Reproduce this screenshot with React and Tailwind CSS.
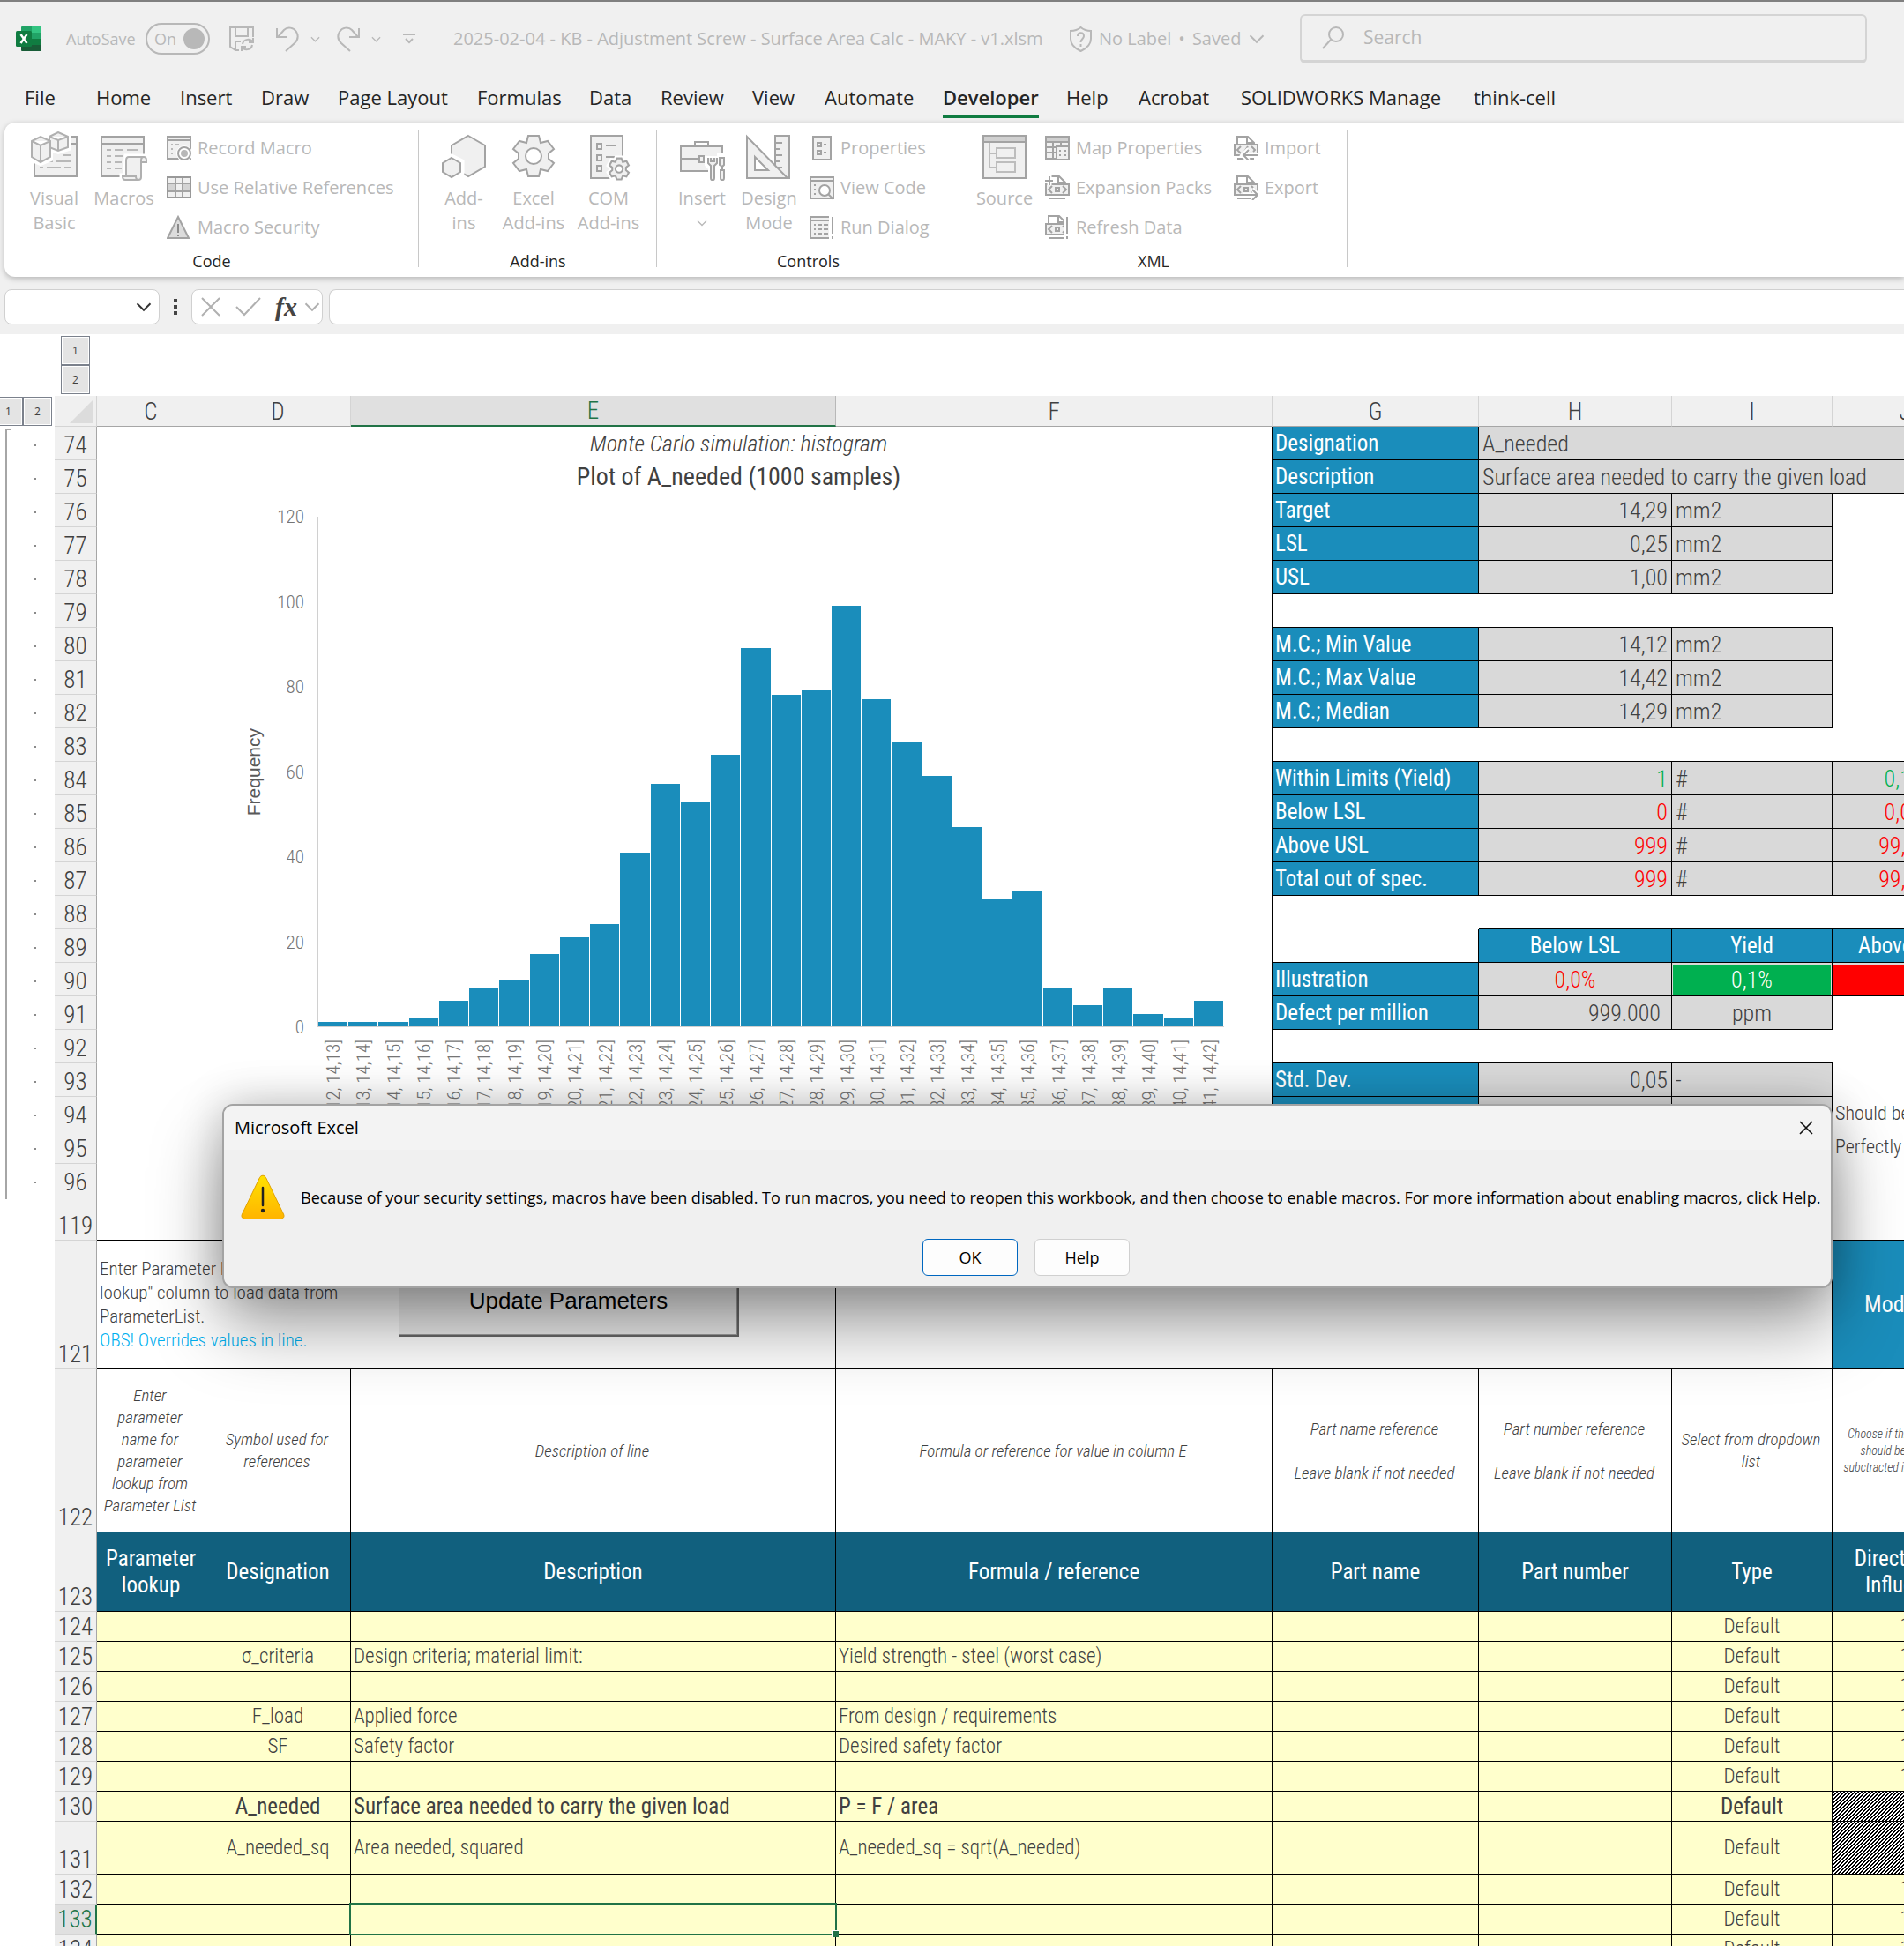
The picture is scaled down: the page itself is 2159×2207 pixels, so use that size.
import React from "react";

const G = "#a3a3a3";
const F = "#f0f0f0";

/* ---------- icons ---------- */

function Big({ children }) {
  return (
    <svg width="54" height="56" viewBox="0 0 54 56" fill="none" stroke={G} strokeWidth="2" aria-hidden="true">
      {children}
    </svg>
  );
}
function Small({ children }) {
  return (
    <svg width="28" height="28" viewBox="0 0 28 28" fill="none" stroke={G} strokeWidth="2" className="shrink-0" aria-hidden="true">
      {children}
    </svg>
  );
}

const VisualBasicIcon = () => (
  <Big>
    <path d="M4 6H52V51H4Z" fill={F} />
    <path d="M4 14H52" />
    <path d="M36 27H46M20 34H25M29 34H46M10 41H14M18 41H34M38 41H46" stroke="#b8b8b8" />
    <path d="M20 5L31 0L43 5V20L31 24L23 21V32L11 37L-1 32V9L11 4Z" fill="#fff" stroke="#fff" strokeWidth="4" />
    <path d="M21 6L31 1L42 6V18L31 22L21 18Z M21 6L31 10L42 6M31 10V22" fill={F} stroke="#b0b0b0" />
    <path d="M1 11L11 6L22 11V29L11 35L1 29Z M1 11L11 16L22 11M11 16V35" fill={F} stroke="#b0b0b0" />
  </Big>
);
const MacrosIcon = () => (
  <Big>
    <path d="M1 6H49V51H1Z" fill={F} />
    <path d="M1 14H49" />
    <path d="M7 21H12M16 21H26M30 21H42M7 28H12M16 28H26M7 35H12M16 35H24M7 42H12M16 42H24" stroke="#b8b8b8" />
    <path d="M29 28H52V36H49V56H24V50H28Z" fill="#fff" stroke="#fff" strokeWidth="5" />
    <path d="M46 35H52V33C52 31 51 29 49 29H32C30 29 29 31 29 33V51H25C25 54 26 55 28 55H43C45 55 46 54 46 52Z" fill={F} stroke="#b0b0b0" />
    <path d="M29 51H40C40 54 41 55 43 55M46 35V33C46 31 47 29 49 29" stroke="#b0b0b0" />
  </Big>
);
const AddinsIcon = () => (
  <Big>
    <path d="M32 5L51 16V40L32 51L13 40V16Z" fill={F} />
    <path d="M13 28L25 34V47L13 54L1 47V34Z" fill="#fff" stroke="#fff" strokeWidth="5" />
    <path d="M13 30L23 36V46L13 52L3 46V36Z" fill={F} />
  </Big>
);
const gear = "M22 5H32L35 13L43 11L48 20L42 25V31L48 36L43 45L35 43L32 51H22L19 43L11 45L6 36L12 31V25L6 20L11 11L19 13Z";
const ExcelAddinsIcon = () => (
  <Big>
    <path d="M21 5H33L35 13L43 11L50 20L44 25V31L50 36L43 45L35 43L33 51H21L19 43L11 45L4 36L10 31V25L4 20L11 11L19 13Z" fill={F} />
    <circle cx="27" cy="28" r="9" fill="#fff" />
  </Big>
);
const ComAddinsIcon = () => (
  <Big>
    <path d="M7 5H43V53H7Z" fill={F} />
    <path d="M14 14H19V20H14ZM24 16H36M14 27H19V33H14ZM24 29H34M14 39H19V45H14Z" />
    <g transform="translate(25 28) scale(.52)">
      <path d={gear} fill="#fff" stroke="#fff" strokeWidth="12" />
      <path d={gear} fill={F} strokeWidth="4" />
      <circle cx="27" cy="28" r="8" fill="#fff" strokeWidth="4" />
    </g>
  </Big>
);
const InsertIcon = () => (
  <Big>
    <path d="M3 17H50V45H3Z" fill={F} />
    <path d="M19 17V12H34V17M3 31H24M29 31H50M24 28H29V35H24Z" />
    <path d="M32 30V38L36 42V55H42L46 50L48 55H53V27H46V30Z" fill="#fff" stroke="#fff" strokeWidth="4" />
    <path d="M34 30V36L37 39V53C37 56 41 56 41 53V39L44 36V30M37 30V34H41V30" fill={F} />
    <path d="M47 30H52V38L50 40V44H52V53C52 56 48 56 48 53V44H50V40L47 38Z" fill={F} />
  </Big>
);
const DesignIcon = () => (
  <Big>
    <path d="M34 5H50V53H34Z" fill={F} />
    <path d="M34 13H42M34 20H39M34 27H42M34 34H39M34 41H42" />
    <path d="M2 6L48 53H2Z" fill={F} />
    <path d="M11 29L26 44H11Z" fill="#fff" />
  </Big>
);
const SourceIcon = () => (
  <Big>
    <path d="M3 5H51V53H3Z" fill={F} />
    <path d="M3 5H51V12H3Z" fill="#d0d0d0" />
    <path d="M10 13V41H18M10 25H18M18 19H39V30H18ZM18 35H39V46H18Z" stroke="#bdbdbd" />
  </Big>
);

const RecordIcon = () => (
  <Small>
    <path d="M1 1H27V26H1Z" fill={F} />
    <path d="M1 5H27" />
    <path d="M5 10H7M9 10H14M5 15H7M5 20H7" stroke="#b8b8b8" />
    <circle cx="20" cy="20" r="9" fill="#fff" stroke="none" />
    <circle cx="20" cy="20" r="7" fill="#fff" />
    <circle cx="20" cy="20" r="3" fill="#b8b8b8" stroke="#b8b8b8" />
  </Small>
);
const RelativeIcon = () => (
  <Small>
    <path d="M1 2H27V25H1Z" fill={F} />
    <path d="M1 9H10V18H1ZM18 9H27V18H18Z" fill="#d4d4d4" stroke="none" />
    <path d="M10 2V25M18 2V25M1 9H27M1 18H27" />
    <path d="M1 2H27V25H1Z" stroke="#999" />
  </Small>
);
const SecurityIcon = () => (
  <Small>
    <path d="M13 2L25 26H1Z" fill="#dcdcdc" />
    <path d="M13 10V20M13 22V24" stroke="#8a8a8a" />
  </Small>
);
const PropertiesIcon = () => (
  <Small>
    <path d="M4 1H24V27H4Z" fill={F} />
    <path d="M9 8H13V12H9ZM16 10H19M9 17H13V21H9ZM16 19H19" />
  </Small>
);
const ViewCodeIcon = () => (
  <Small>
    <path d="M1 2H27V26H1Z" fill={F} />
    <path d="M1 6H27M5 11H7M5 16H7M5 21H7" />
    <circle cx="17" cy="17" r="6" fill="#fff" />
    <path d="M21 21L27 27" />
  </Small>
);
const RunDialogIcon = () => (
  <Small>
    <path d="M22 2H1V26H22" fill={F} />
    <path d="M1 6H22M5 11H7M9 11H14M16 11H21M5 16H7M9 16H14M16 16H21M5 21H7M9 21H14M16 21H21M26 2V21M26 24V27" />
  </Small>
);
const MapIcon = () => (
  <Small>
    <path d="M1 1H27V26H1Z" fill={F} />
    <path d="M1 1H27V7H1Z" fill="#d0d0d0" />
    <path d="M9 7V26M18 7V12M1 13H12M1 19H12" />
    <path d="M13 12H27V27H13Z" fill={F} />
    <path d="M16 17H18M21 17H24M16 22H18M21 22H24" />
  </Small>
);
function XmlIcon({ children, extra }) {
  return (
    <Small>
      <path d="M4 10V1H16L23 8V10" />
      <path d="M15 1V8H22" />
      <path d="M1 10H27V22H1Z" fill={F} />
      <path d="M4 26H23" />
      {children || <path d="M8 12L4 16L8 20M20 12L24 16L20 20M12 14H16V18H12Z" />}
      {extra}
    </Small>
  );
}
const ExpansionIcon = () => (
  <XmlIcon
    extra={
      <>
        <path d="M0 5H9M5 0V11" stroke="#fff" strokeWidth="5" />
        <path d="M0 6H9M5 1V11" />
      </>
    }
  />
);
const RefreshIcon = () => (
  <XmlIcon
    extra={
      <>
        <path d="M25 0V28" stroke="#fff" strokeWidth="6" />
        <path d="M25 2V21M25 24V27" />
      </>
    }
  />
);
const ImportIcon = () => (
  <XmlIcon
    extra={
      <>
        <path d="M11 22H28M17 15L10 22L17 28" stroke="#fff" strokeWidth="5" />
        <path d="M11 22H27M17 16L11 22L17 28" />
      </>
    }
  >
    <path d="M8 12L4 16L8 20M20 12L24 16L22 18M16 12L12 18" />
  </XmlIcon>
);
const ExportIcon = () => (
  <XmlIcon
    extra={
      <>
        <path d="M10 22H27M21 15L27 22L21 28" stroke="#fff" strokeWidth="5" />
        <path d="M10 22H26M21 16L27 22L21 28" />
      </>
    }
  />
);

function Chevron({ className, w = 10 }) {
  return (
    <svg className={className} width={w} height={w} viewBox="0 0 12 12" fill="none" stroke="currentColor" strokeWidth="1.3" aria-hidden="true">
      <path d="M1 3.5L6 8.5L11 3.5" />
    </svg>
  );
}

const ExcelLogo = () => (
  <svg width="29" height="28" viewBox="0 0 29 28" className="shrink-0" aria-hidden="true">
    <path d="M7 0H28a1 1 0 0 1 1 1V14H6V1a1 1 0 0 1 1-1z" fill="#21a366" />
    <path d="M18 0h10a1 1 0 0 1 1 1v6H18z" fill="#33c481" />
    <path d="M6 7h12v7H6z" fill="#107c41" />
    <path d="M18 7h11v7H18z" fill="#21a366" />
    <path d="M6 14h23v13a1 1 0 0 1-1 1H7a1 1 0 0 1-1-1z" fill="#185c37" />
    <path d="M18 14h11v7H18z" fill="#107c41" />
    <rect x="0" y="5" width="18" height="18" rx="1.5" fill="#107c41" />
    <path d="M5.5 9L12.5 19M12.5 9L5.5 19" stroke="#fff" strokeWidth="2.4" />
  </svg>
);

/* ---------- title bar ---------- */

function TitleBar() {
  return (
    <div className="flex h-[84px] shrink-0 items-center pl-[18px] text-[#b8b8b8]">
      <ExcelLogo />
      <label htmlFor="autosave" className="ml-7 w-[90px] whitespace-nowrap text-[18px]">AutoSave</label>
      <button id="autosave" role="switch" aria-checked="true" className="flex h-9 w-[73px] shrink-0 items-center justify-between rounded-full border-2 border-[#b8b8b8] pl-2 pr-1 text-[18px]">
        On
        <span className="size-6 rounded-full bg-[#b8b8b8]" />
      </button>
      <button aria-label="Save" className="ml-[22px]">
        <svg width="29" height="29" viewBox="0 0 29 29" fill="none" stroke="currentColor" strokeWidth="2">
          <path d="M11 27H7L1 23V1H27V12M7 1V11H21V1M7 27V17H13" />
          <path d="M27 13V18H22M27 18C24 13 16 14 15 20M14 28V23H19M14 23C17 28 25 27 26 21" />
        </svg>
      </button>
      <button aria-label="Undo" className="ml-6">
        <svg width="26" height="29" viewBox="0 0 26 29" fill="none" stroke="currentColor" strokeWidth="2">
          <path d="M1 2V12H12M2 12L9 4C13 0 20 1 23 6C26 11 25 15 21 19L11 28" />
        </svg>
      </button>
      <Chevron className="ml-[13px]" w={11} />
      <button aria-label="Redo" className="ml-[19px]">
        <svg width="26" height="29" viewBox="0 0 26 29" fill="none" stroke="currentColor" strokeWidth="2">
          <path d="M25 2V12H14M24 12L17 4C13 0 6 1 3 6C0 11 1 15 5 19L15 28" />
        </svg>
      </button>
      <Chevron className="ml-[13px]" w={11} />
      <svg className="ml-[25px] shrink-0" width="14" height="14" viewBox="0 0 14 14" fill="none" stroke="currentColor" strokeWidth="2" aria-hidden="true">
        <path d="M0 2H14M3 7L7 11L11 7" />
      </svg>
      <h1 className="ml-[43px] w-[699px] shrink-0 whitespace-nowrap text-[20px]">
        2025-02-04 - KB - Adjustment Screw - Surface Area Calc - MAKY - v1.xlsm
      </h1>
      <svg className="shrink-0" width="25" height="29" viewBox="0 0 25 29" fill="none" stroke="currentColor" strokeWidth="2" aria-hidden="true">
        <path d="M12.500 1C9 4 5 5 1 5V14C1 20 6 25 12.500 28C19 25 24 20 24 14V5C20 5 16 4 12.500 1Z" />
        <path d="M9 11C9 6 16 6 16 11C16 14 12.500 14 12.500 18M12.500 20V23" />
      </svg>
      <span className="ml-2 flex w-[170px] shrink-0 gap-2 whitespace-nowrap text-[20px]">
        <span>No Label</span>
        <span>•</span>
        <span>Saved</span>
      </span>
      <Chevron className="shrink-0" w={18} />
      <label className="ml-10 mr-[42px] flex h-14 grow items-center rounded-md border-2 border-b-4 border-[#d4d4d4] pl-[23px]">
        <svg width="25" height="26" viewBox="0 0 25 26" fill="none" stroke="currentColor" strokeWidth="2" aria-hidden="true">
          <circle cx="16" cy="9" r="8" />
          <path d="M10 15L1 25" />
        </svg>
        <input placeholder="Search" aria-label="Search" className="ml-[22px] min-w-0 grow bg-transparent text-[21px] outline-none placeholder:text-[#b8b8b8]" />
      </label>
    </div>
  );
}

/* ---------- tabs ---------- */

const tabs = [
  ["File", "w-[81px]"],
  ["Home", "w-[95px]"],
  ["Insert", "w-[92px]"],
  ["Draw", "w-[87px]"],
  ["Page Layout", "w-[158px]"],
  ["Formulas", "w-[127px]"],
  ["Data", "w-[81px]"],
  ["Review", "w-[104px]"],
  ["View", "w-[82px]"],
  ["Automate", "w-[134px]"],
  ["Developer", "w-[140px]"],
  ["Help", "w-[82px]"],
  ["Acrobat", "w-[116px]"],
  ["SOLIDWORKS Manage", "w-[264px]"],
  ["think-cell", "w-[120px]"],
];

function Tabs() {
  return (
    <nav className="flex h-[53px] shrink-0 pl-7 text-[22px] text-[#252525]">
      {tabs.map(([name, w]) => (
        <div key={name} className={`${w} shrink-0`}>
          <button
            className={
              name === "Developer"
                ? "h-12 whitespace-nowrap border-b-4 border-[#107c41] pb-1 pt-2 font-semibold leading-8"
                : "h-12 whitespace-nowrap border-b-4 border-transparent pb-1 pt-2 leading-8"
            }
          >
            {name}
          </button>
        </div>
      ))}
    </nav>
  );
}

/* ---------- ribbon ---------- */

function BigButton({ icon, lines, w }) {
  return (
    <button className={`${w} flex shrink-0 flex-col items-center pt-1 text-[20px] leading-7`}>
      {icon}
      <span className="mt-[6px] whitespace-nowrap">
        {lines.map((l, i) => (
          <span key={i} className="block">{l}</span>
        ))}
      </span>
    </button>
  );
}
function SmallButton({ icon, children }) {
  return (
    <button className="flex h-[45px] items-center gap-[7px] whitespace-nowrap text-[20px] leading-7">
      {icon}
      {children}
    </button>
  );
}
function Group({ label, w, pl, children }) {
  return (
    <section className={`${w} flex shrink-0 flex-col pt-[6px]`}>
      <div className={`${pl} flex h-[137px]`}>{children}</div>
      <h2 className="text-center text-[18px] leading-7 text-[#252525]">{label}</h2>
    </section>
  );
}
const Sep = () => <div className="-ml-px mb-[11px] mt-2 w-px shrink-0 bg-[#c8c8c8]" />;

function Ribbon() {
  return (
    <div className="ml-[5px] flex h-[175px] shrink-0 rounded-l-xl bg-white text-[#b8b8b8] shadow-[0_2px_6px_rgba(0,0,0,0.25)]">
      <Group label="Code" w="w-[470px]" pl="pl-[17px]">
        <BigButton icon={<VisualBasicIcon />} lines={["Visual", "Basic"]} w="w-[79px]" />
        <BigButton icon={<MacrosIcon />} lines={["Macros"]} w="w-[79px]" />
        <div className="ml-[9px]">
          <SmallButton icon={<RecordIcon />}>Record Macro</SmallButton>
          <SmallButton icon={<RelativeIcon />}>Use Relative References</SmallButton>
          <SmallButton icon={<SecurityIcon />}>Macro Security</SmallButton>
        </div>
      </Group>
      <Sep />
      <Group label="Add-ins" w="w-[270px]" pl="pl-[11px]">
        <BigButton icon={<AddinsIcon />} lines={["Add-", "ins"]} w="w-[80px]" />
        <BigButton icon={<ExcelAddinsIcon />} lines={["Excel", "Add-ins"]} w="w-[78px]" />
        <BigButton icon={<ComAddinsIcon />} lines={["COM", "Add-ins"]} w="w-[92px]" />
      </Group>
      <Sep />
      <Group label="Controls" w="w-[343px]" pl="pl-[13px]">
        <BigButton icon={<InsertIcon />} lines={["Insert", <Chevron key="c" className="mx-auto mt-2" w={12} />]} w="w-[76px]" />
        <BigButton icon={<DesignIcon />} lines={["Design", "Mode"]} w="w-[76px]" />
        <div className="ml-2">
          <SmallButton icon={<PropertiesIcon />}>Properties</SmallButton>
          <SmallButton icon={<ViewCodeIcon />}>View Code</SmallButton>
          <SmallButton icon={<RunDialogIcon />}>Run Dialog</SmallButton>
        </div>
      </Group>
      <Sep />
      <Group label="XML" w="w-[440px]" pl="pl-[10px]">
        <BigButton icon={<SourceIcon />} lines={["Source"]} w="w-[82px]" />
        <div className="ml-[5px] w-[214px]">
          <SmallButton icon={<MapIcon />}>Map Properties</SmallButton>
          <SmallButton icon={<ExpansionIcon />}>Expansion Packs</SmallButton>
          <SmallButton icon={<RefreshIcon />}>Refresh Data</SmallButton>
        </div>
        <div>
          <SmallButton icon={<ImportIcon />}>Import</SmallButton>
          <SmallButton icon={<ExportIcon />}>Export</SmallButton>
        </div>
      </Group>
      <Sep />
    </div>
  );
}

/* ---------- formula bar ---------- */

function FormulaBar() {
  return (
    <div className="flex h-[65px] shrink-0 items-start pl-[5px] pt-[14px]">
      <div className="flex h-10 w-44 shrink-0 items-center rounded-lg border border-[#d0d0d0] bg-white pr-2">
        <input aria-label="Name Box" className="min-w-0 grow bg-transparent outline-none" />
        <Chevron className="shrink-0 text-[#333]" w={18} />
      </div>
      <svg className="ml-4 mt-[10px] shrink-0" width="4" height="20" viewBox="0 0 4 20" fill="#444" aria-hidden="true">
        <path d="M0 1h4v4H0zM0 8h4v4H0zM0 15h4v4H0z" />
      </svg>
      <div className="ml-4 flex h-10 w-[149px] shrink-0 items-center rounded-lg border border-[#d0d0d0] bg-white pl-[10px] text-[#b0b0b0]">
        <button aria-label="Cancel">
          <svg width="22" height="22" viewBox="0 0 22 22" fill="none" stroke="currentColor" strokeWidth="2"><path d="M1 1L21 21M21 1L1 21" /></svg>
        </button>
        <button aria-label="Enter" className="ml-[17px]">
          <svg width="29" height="22" viewBox="0 0 29 22" fill="none" stroke="currentColor" strokeWidth="2"><path d="M1 11L10 20L28 1" /></svg>
        </button>
        <button className="ml-4 font-['Liberation_Serif',serif] text-[30px] font-bold italic leading-8 text-[#444]">fx</button>
        <Chevron className="ml-2 shrink-0" w={18} />
      </div>
      <input aria-label="Formula Bar" className="ml-[7px] h-10 min-w-0 grow rounded-l-lg border border-r-0 border-[#d0d0d0] bg-white outline-none" />
    </div>
  );
}

/* ---------- chart ---------- */

const freq = [1, 1, 1, 2, 6, 9, 11, 17, 21, 24, 41, 57, 53, 64, 89, 78, 79, 99, 77, 67, 59, 47, 30, 32, 9, 5, 9, 3, 2, 6];
const ticks = [120, 100, 80, 60, 40, 20, 0];

function Chart() {
  return (
    <figure className="flex h-[799px] flex-col overflow-hidden font-light">
      <figcaption className="pt-[3px] text-center text-[28px] font-normal leading-8 text-[#404040]">Plot of A_needed (1000 samples)</figcaption>
      <div className="mt-[29px] flex h-[579px] pl-[40px]">
        <div className="flex w-[30px] items-center justify-center">
          <span className="rotate-180 font-['Liberation_Sans',sans-serif] text-[21px] font-normal text-[#595959] [writing-mode:vertical-rl]">Frequency</span>
        </div>
        <div className="-my-4 flex w-[42px] flex-col justify-between text-right text-[21px] leading-8 text-[#757575]">
          {ticks.map((t) => (
            <span key={t}>{t}</span>
          ))}
        </div>
        <div className="ml-[15px] flex w-[1028px] items-end border-b border-l border-[#d0d0d0]">
          {freq.map((f, i) => (
            <div key={i} className="flex-1 border-r border-white bg-[#1a8dbb]" style={{ height: `${(f / 120) * 100}%` }} />
          ))}
        </div>
      </div>
      <div className="ml-[128px] mt-[14px] flex w-[1028px] text-[21px] text-[#757575]">
        {freq.map((_, i) => (
          <div key={i} className="flex flex-1 justify-center">
            <span className="rotate-180 whitespace-nowrap text-right leading-6 [writing-mode:vertical-rl]">{`[14,${12 + i}, 14,${13 + i}]`}</span>
          </div>
        ))}
      </div>
    </figure>
  );
}

/* ---------- worksheet ---------- */

const RH = "border-b border-r border-b-[#d4d4d4] border-r-[#a6a6a6] bg-[#f0f0f0] p-0 text-center align-bottom text-[27px] font-light leading-8 text-[#404040]";
const LBL = "border-b border-r border-black bg-[#1a8dbb] px-[3px] py-0 text-left text-[25px] font-normal leading-8 text-white";
const LBLC = "border-b border-r border-black bg-[#1a8dbb] px-1 py-0 text-center text-[25px] font-normal leading-8 text-white";
const VAL = "border-b border-r border-black bg-[#d9d9d9] px-1 py-0 text-[26px] font-light leading-8 whitespace-nowrap";

const stats = [
  { r: 74, label: "Designation", wide: "A_needed" },
  { r: 75, label: "Description", wide: "Surface area needed to carry the given load" },
  { r: 76, label: "Target", v: "14,29", u: "mm2" },
  { r: 77, label: "LSL", v: "0,25", u: "mm2" },
  { r: 78, label: "USL", v: "1,00", u: "mm2" },
  { r: 79 },
  { r: 80, label: "M.C.; Min Value", v: "14,12", u: "mm2" },
  { r: 81, label: "M.C.; Max Value", v: "14,42", u: "mm2" },
  { r: 82, label: "M.C.; Median", v: "14,29", u: "mm2" },
  { r: 83 },
  { r: 84, label: "Within Limits (Yield)", v: "1", u: "#", j: "0,1%", c: "text-[#00b050]" },
  { r: 85, label: "Below LSL", v: "0", u: "#", j: "0,0%", c: "text-[#ff0000]" },
  { r: 86, label: "Above USL", v: "999", u: "#", j: "99,9%", c: "text-[#ff0000]" },
  { r: 87, label: "Total out of spec.", v: "999", u: "#", j: "99,9%", c: "text-[#ff0000]" },
  { r: 88 },
  { r: 89, head: true },
  { r: 90, bars: true },
  { r: 91, label: "Defect per million", v: "999.000", u: "ppm", dpm: true },
  { r: 92 },
  { r: 93, label: "Std. Dev.", v: "0,05", u: "-" },
  { r: 94, label: "\u00a0", v: "1,07", note: "Should be" },
  { r: 95, label: "\u00a0", note: "Perfectly" },
  { r: 96, label: "\u00a0" },
];

function StatCells({ s, next }) {
  const line = next ? "border-b border-b-black" : "";
  if (s.wide)
    return (
      <>
        <th scope="row" className={LBL}>{s.label}</th>
        <td colSpan={3} className={`${VAL} text-left text-[#404040]`}>{s.wide}</td>
      </>
    );
  if (s.head)
    return (
      <>
        <td className="border-b border-r border-black" />
        <th scope="col" className={LBLC}>Below LSL</th>
        <th scope="col" className={LBLC}>Yield</th>
        <th scope="col" className={LBLC}>Above USL</th>
      </>
    );
  if (s.bars)
    return (
      <>
        <th scope="row" className={LBL}>Illustration</th>
        <td className={`${VAL} text-center text-[#ff0000]`}>0,0%</td>
        <td className="border-b border-r border-black bg-[#d9d9d9] p-px text-center text-[26px] font-light text-white">
          <div className="bg-[#00b050] leading-[34px]">0,1%</div>
        </td>
        <td className="border-b border-r border-black bg-[#d9d9d9] p-px">
          <div className="h-[34px] bg-[#ff0000]" />
        </td>
      </>
    );
  if (!s.label)
    return (
      <>
        <td className={line} />
        <td className={line} />
        <td className={line} />
        <td className={next === "j" ? line : ""} />
      </>
    );
  return (
    <>
      <th scope="row" className={LBL}>{s.label}</th>
      <td className={`${VAL} text-right ${s.c || "text-[#404040]"} ${s.dpm ? "pr-3" : ""}`}>{s.v}</td>
      <td className={`${VAL} ${s.dpm ? "text-center" : "text-left"} text-[#404040]`}>{s.u}</td>
      {s.j ? (
        <td className={`${VAL} text-center ${s.c}`}>{s.j}</td>
      ) : (
        <td className="whitespace-nowrap px-[3px] py-0 text-left text-[22px] font-light leading-8 text-[#404040]">{s.note}</td>
      )}
    </>
  );
}

const NOTE = "border-b border-r border-black pl-1 pr-[6px] py-0 text-center text-[19px] font-light italic leading-[25px] text-[#404040]";
const HEAD = "border-b border-r border-black bg-[#11607e] p-0 text-center text-[25px] font-normal leading-[30px] text-white whitespace-nowrap";

const params = [
  { r: 124 },
  { r: 125, d: "σ_criteria", e: "Design criteria; material limit:", f: "Yield strength - steel (worst case)" },
  { r: 126 },
  { r: 127, d: "F_load", e: "Applied force", f: "From design / requirements" },
  { r: 128, d: "SF", e: "Safety factor", f: "Desired safety factor" },
  { r: 129 },
  { r: 130, d: "A_needed", e: "Surface area needed to carry the given load", f: "P = F / area", bold: true, hatch: true },
  { r: 131, d: "A_needed_sq", e: "Area needed, squared", f: "A_needed_sq = sqrt(A_needed)", tall: true, hatch: true },
  { r: 132 },
  { r: 133, sel: true },
  { r: 134 },
];

function ParamRow({ p }) {
  const cell = "border-b border-r border-black px-[3px] pb-0 pt-px leading-8";
  return (
    <tr className={`${p.tall ? "h-[60px]" : "h-[34px]"} bg-[#ffffcc] text-[#404040] ${p.bold ? "text-[25px] font-normal" : "text-[23px] font-light"}`}>
      <th
        scope="row"
        className={
          p.sel
            ? "border-b border-r-2 border-b-[#d4d4d4] border-r-[#217346] bg-[#e0e0e0] p-0 text-center align-bottom text-[27px] font-light leading-8 text-[#217346]"
            : RH
        }
      >
        {p.r}
      </th>
      <td className={cell} />
      <td className={`${cell} text-center`}>{p.d}</td>
      <td className={p.sel ? "relative border-b border-r border-black p-0" : cell}>
        {p.e}
        {p.sel && (
          <div className="absolute -inset-x-0.5 -inset-y-0.5 border-2 border-[#217346]">
            <span className="absolute -bottom-1 -right-1 size-2 border-l border-t border-white bg-[#217346]" />
          </div>
        )}
      </td>
      <td className={cell}>{p.f}</td>
      <td className={cell} />
      <td className={cell} />
      <td className={`${cell} text-center`}>Default</td>
      {p.hatch ? (
        <td className="border-b border-r border-black bg-[linear-gradient(135deg,#000_25%,#fff_25%,#fff_50%,#000_50%,#000_75%,#fff_75%)] bg-[length:4px_4px]" />
      ) : (
        <td className={`${cell} text-center`}>1</td>
      )}
    </tr>
  );
}

const cols = ["C", "D", "E", "F", "G", "H", "I", "J"];

function LevelButton({ n }) {
  return (
    <button className="flex h-[33px] w-[33px] shrink-0 items-center justify-center border border-[#7b818c] bg-[#e4e4e4] text-[12px] text-[#404040] shadow-[inset_0_0_0_1px_#fff]">{n}</button>
  );
}

function Sheet() {
  return (
    <div className="flex grow flex-col bg-white">
      <div className="flex h-[70px] shrink-0 flex-col pl-[69px] pt-[2px]">
        <LevelButton n="1" />
        <LevelButton n="2" />
      </div>
      <div className="flex">
        <div className="w-[62px] shrink-0">
          <div className="-ml-[7px] flex h-[35px] pt-px">
            <LevelButton n="1" />
            <LevelButton n="2" />
          </div>
          <div className="ml-[6px] mt-[2px] flex border-l-2 border-[#a6a6a6]">
            <div className="h-[2px] w-1 bg-[#a6a6a6]" />
            <div className="ml-[27px]">
              {stats.map((s) => (
                <div key={s.r} className="flex h-[38px] items-center">
                  <span className="size-[2px] bg-[#8a8a8a]" />
                </div>
              ))}
            </div>
          </div>
        </div>
        <table className="w-[2181px] shrink-0 table-fixed border-separate border-spacing-0 font-['Roboto_Condensed','Roboto',sans-serif]">
          <colgroup>
            <col className="w-[48px]" />
            <col className="w-[123px]" />
            <col className="w-[165px]" />
            <col className="w-[550px]" />
            <col className="w-[495px]" />
            <col className="w-[234px]" />
            <col className="w-[219px]" />
            <col className="w-[182px]" />
            <col className="w-[165px]" />
          </colgroup>
          <thead>
            <tr className="h-[35px]">
              <th className="border-b border-r border-[#d4d4d4] bg-[#f0f0f0] p-0">
                <svg className="ml-[17px]" width="28" height="27" viewBox="0 0 28 27" aria-label="Select all"><path d="M27 0V27H0Z" fill="#dcdcdc" /></svg>
              </th>
              {cols.map((c) => (
                <th
                  key={c}
                  scope="col"
                  className={
                    c === "E"
                      ? "border-b-2 border-r border-b-[#217346] border-r-[#b8b8b8] bg-[#e0e0e0] px-0 pb-0 pt-px text-[27px] font-light leading-8 text-[#217346]"
                      : "border-b border-r border-b-[#a6a6a6] border-r-[#d4d4d4] bg-[#f0f0f0] px-0 pb-0 pt-px text-[27px] font-light leading-8 text-[#404040]"
                  }
                >
                  {c}
                </th>
              ))}
            </tr>
          </thead>
          <tbody>
            {stats.map((s, i) => {
              const n = stats[i + 1];
              const next = n && n.label ? (n.j ? "j" : "y") : false;
              return (
                <tr key={s.r} className="h-[38px]">
                  <th scope="row" className={RH}>{s.r}</th>
                  <td className="border-r border-black" />
                  {s.r === 74 && (
                    <td colSpan={3} className="border-r border-black p-0 text-center text-[26px] font-light italic leading-8 text-[#404040]">
                      Monte Carlo simulation: histogram
                    </td>
                  )}
                  {s.r === 75 && (
                    <td colSpan={3} rowSpan={22} className="border-r border-black p-0 align-top">
                      <Chart />
                    </td>
                  )}
                  {s.r === 88 ? (
                    <>
                      <td />
                      <td className="border-b border-black" />
                      <td className="border-b border-black" />
                      <td className="border-b border-black" />
                    </>
                  ) : (
                    <StatCells s={s} next={next} />
                  )}
                </tr>
              );
            })}
            <tr className="h-[49px]">
              <th scope="row" className={RH}>119</th>
              <td colSpan={8} className="border-b border-black" />
            </tr>
            <tr className="h-[146px]">
              <th scope="row" className={RH}>121</th>
              <td colSpan={3} className="border-b border-r border-black p-0 align-top">
                <div className="flex h-[145px]">
                  <p className="w-[343px] pl-[3px] pt-[19px] text-[21px] font-light leading-[27px] text-[#404040]">
                    Enter Parameter Name in "Parameter lookup" column to load data from ParameterList.
                    <span className="block text-[#00b0f0]">OBS! Overrides values in line.</span>
                  </p>
                  <button className="mb-[36px] mt-[30px] w-[385px] border-b-2 border-r-2 border-[#696969] bg-[#f0f0f0] font-['Liberation_Sans',sans-serif] text-[26px] text-black shadow-[inset_-1px_-1px_0_#a0a0a0]">
                    Update Parameters
                  </button>
                </div>
              </td>
              <td colSpan={4} className="border-b border-r border-black" />
              <td className="border-b border-black bg-[#1a8dbb] p-0 pl-9 text-left text-[26px] text-white">Model</td>
            </tr>
            <tr className="h-[185px]">
              <th scope="row" className={RH}>122</th>
              <td className={NOTE}>Enter parameter name for parameter lookup from Parameter List</td>
              <td className={NOTE}>Symbol used for references</td>
              <td className={NOTE}>Description of line</td>
              <td className={NOTE}>Formula or reference for value in column E</td>
              <td className={NOTE}>Part name reference<br /><br />Leave blank if not needed</td>
              <td className={NOTE}>Part number reference<br /><br />Leave blank if not needed</td>
              <td className={NOTE}>Select from dropdown list</td>
              <td className="whitespace-nowrap border-b border-r border-black p-0 text-center text-[14px] font-light italic leading-[19px] text-[#404040]">
                Choose if this parameter<br />should be added or<br />subctracted in the formula
              </td>
            </tr>
            <tr className="h-[90px]">
              <th scope="row" className={RH}>123</th>
              <th scope="col" className={HEAD}>Parameter<br />lookup</th>
              <th scope="col" className={HEAD}>Designation</th>
              <th scope="col" className={HEAD}>Description</th>
              <th scope="col" className={HEAD}>Formula / reference</th>
              <th scope="col" className={HEAD}>Part name</th>
              <th scope="col" className={HEAD}>Part number</th>
              <th scope="col" className={HEAD}>Type</th>
              <th scope="col" className={HEAD}>Direction of<br />Influence</th>
            </tr>
            {params.map((p) => (
              <ParamRow key={p.r} p={p} />
            ))}
          </tbody>
        </table>
      </div>
    </div>
  );
}

/* ---------- message box ---------- */

function MessageBox() {
  return (
    <div
      role="dialog"
      aria-labelledby="msg-title"
      className="absolute left-[252px] top-[1250px] flex w-[1826px] flex-col overflow-hidden rounded-xl border-2 border-[#a3a3a3] bg-[#f0f0f0] text-black shadow-[0_44px_80px_rgba(0,0,0,0.38),0_0_50px_rgba(0,0,0,0.22)]"
    >
      <div className="flex h-[50px] items-center justify-between bg-[#f3f3f3] pl-3 pr-5">
        <h2 id="msg-title" className="text-[20px]">Microsoft Excel</h2>
        <button aria-label="Close">
          <svg width="16" height="16" viewBox="0 0 16 16" stroke="#111" strokeWidth="1.6"><path d="M1 1L15 15M15 1L1 15" /></svg>
        </button>
      </div>
      <div className="flex items-center pl-[19px] pt-7">
        <svg width="50" height="52" viewBox="0 0 50 52" className="shrink-0" aria-hidden="true">
          <defs>
            <linearGradient id="warn" x1="0" y1="0" x2="0" y2="1">
              <stop offset="0" stopColor="#ffe100" />
              <stop offset="1" stopColor="#ffb400" />
            </linearGradient>
          </defs>
          <path d="M21.500 3.500C23 .5 27 .5 28.500 3.500L48.500 45C50 48 48 50.500 45 50.500H5C2 50.500 0 48 1.500 45Z" fill="url(#warn)" stroke="#e0a100" />
          <path d="M25 15V35" stroke="#222" strokeWidth="2.500" strokeLinecap="round" />
          <circle cx="25" cy="41" r="2.200" fill="#222" />
        </svg>
        <p className="ml-[18px] whitespace-nowrap text-[18px]">
          Because of your security settings, macros have been disabled. To run macros, you need to reopen this workbook, and then choose to enable macros. For more information about enabling macros, click Help.
        </p>
      </div>
      <div className="mb-3 mt-[21px] flex justify-center gap-[19px] pr-[3px] text-[18px]">
        <button className="h-[42px] w-[108px] rounded-md border border-[#0067c0] bg-[#fdfdfd]">OK</button>
        <button className="h-[42px] w-[108px] rounded-md border border-[#d0d0d0] bg-[#fdfdfd]">Help</button>
      </div>
    </div>
  );
}

export default function App() {
  return (
    <div className="relative flex h-screen w-full flex-col overflow-hidden border-t-2 border-[#808080] bg-[#f0f0f0] font-['Open_Sans','Noto_Sans',sans-serif]">
      <TitleBar />
      <Tabs />
      <Ribbon />
      <FormulaBar />
      <Sheet />
      <MessageBox />
    </div>
  );
}
